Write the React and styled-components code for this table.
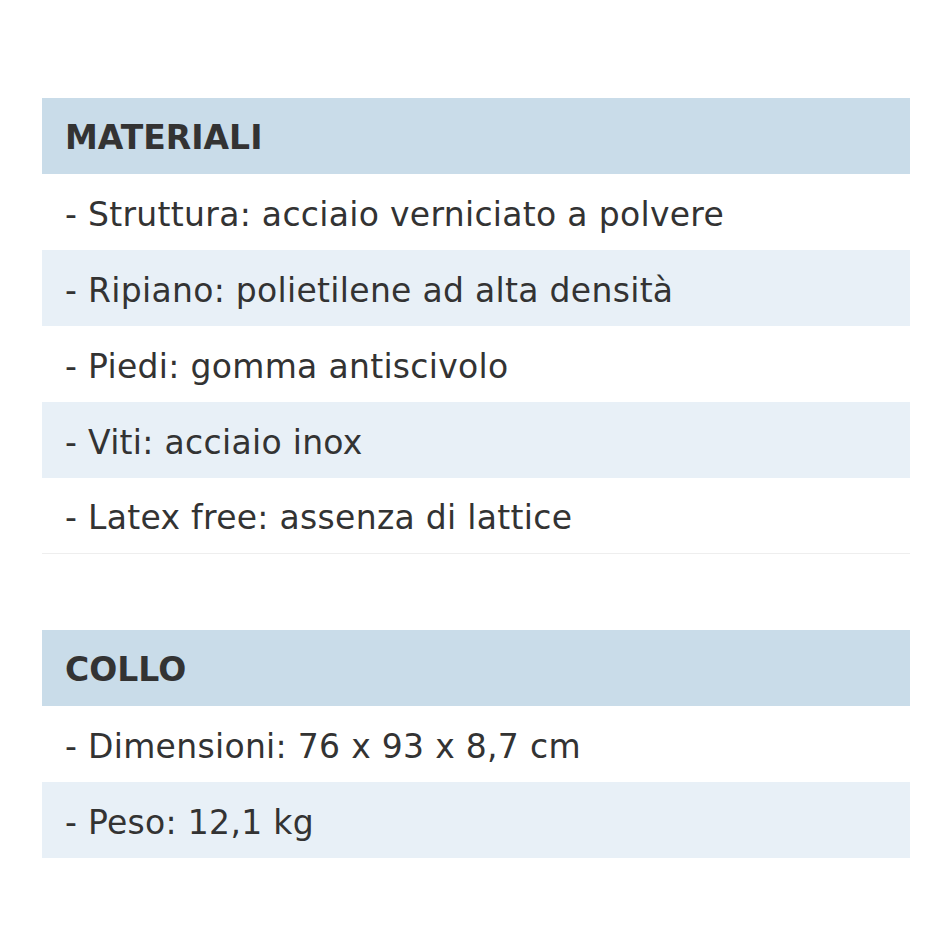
import React from "react";
import styled, { createGlobalStyle } from "styled-components";

const Global = createGlobalStyle`
  html, body { margin: 0; padding: 0; background: #ffffff; }
  body { font-family: "DejaVu Sans", "Noto Sans", sans-serif; color: #333333; }
`;

const Page = styled.div`
  width: 950px;
  min-height: 950px;
  box-sizing: border-box;
  padding: 98px 40px 0 42px;
  display: flex;
  flex-direction: column;
  gap: 76px;
`;

const Section = styled.section`
  display: flex;
  flex-direction: column;
`;

const Header = styled.div`
  height: 76px;
  box-sizing: border-box;
  background: #c9dce9;
  display: flex;
  align-items: center;
  padding: 2px 0 0 23px;
  font-size: 33px;
  line-height: 1;
  font-weight: 700;
  color: #333333;
`;

const Row = styled.div`
  height: 76px;
  box-sizing: border-box;
  background: ${(p) => (p.$shaded ? "#e8f0f7" : "#ffffff")};
  border-bottom: ${(p) => (p.$last ? "1px solid #eeeeee" : "none")};
  display: flex;
  align-items: center;
  padding: 4px 0 0 23px;
  font-size: 33px;
  line-height: 1;
  letter-spacing: 0.3px;
  color: #333333;
`;

const sections = [
  {
    title: "MATERIALI",
    rows: [
      "- Struttura: acciaio verniciato a polvere",
      "- Ripiano: polietilene ad alta densità",
      "- Piedi: gomma antiscivolo",
      "- Viti: acciaio inox",
      "- Latex free: assenza di lattice",
    ],
  },
  {
    title: "COLLO",
    rows: ["- Dimensioni: 76 x 93 x 8,7 cm", "- Peso: 12,1 kg"],
  },
];

export default function App() {
  return (
    <>
      <Global />
      <Page>
        {sections.map((s, si) => (
          <Section key={s.title}>
            <Header>{s.title}</Header>
            {s.rows.map((r, i) => (
              <Row key={r} $shaded={i % 2 === 1} $last={si === 0 && i === s.rows.length - 1}>
                {r}
              </Row>
            ))}
          </Section>
        ))}
      </Page>
    </>
  );
}
